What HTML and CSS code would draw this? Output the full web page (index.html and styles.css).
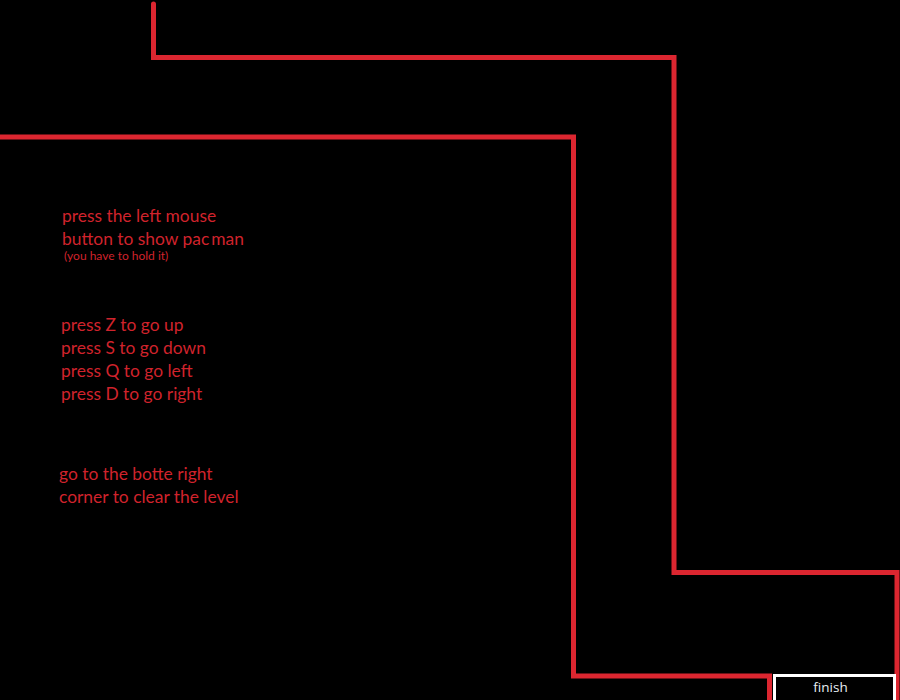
FILE: index.html
```html
<!DOCTYPE html>
<html>
<head>
<meta charset="utf-8">
<link rel="stylesheet" href="styles.css">
</head>
<body>
<div class="stage">
  <svg class="walls" width="900" height="700" viewBox="0 0 900 700">
    <path d="M153.5 4 V57.5 H674 V572.5 H897 V702" />
    <path d="M-2 137 H573.5 V676 H769.5 V702" />
  </svg>
  <div class="help">
    <div class="block b1">
      <p>press the left mouse</p>
      <p>button to show pac<span class="gap"></span>man</p>
      <p class="small">(you have to hold it)</p>
    </div>
    <div class="block b2">
      <p>press Z to go up</p>
      <p>press S to go down</p>
      <p>press Q to go left</p>
      <p>press D to go right</p>
    </div>
    <div class="block b3">
      <p>go to the botte right</p>
      <p>corner to clear the level</p>
    </div>
  </div>
  <div class="finish">finish</div>
</div>
</body>
</html>
```
FILE: styles.css
```css
html, body {
  margin: 0;
  padding: 0;
  background: #000;
  overflow: hidden;
}
.stage {
  position: relative;
  width: 900px;
  height: 700px;
  background: #000;
  font-family: Lato, "Open Sans", sans-serif;
}
.walls {
  position: absolute;
  left: 0;
  top: 0;
}
.walls path {
  fill: none;
  stroke: #dc2630;
  stroke-width: 5;
  stroke-linejoin: miter;
  stroke-linecap: round;
}
.help {
  display: flex;
  flex-direction: column;
  padding-top: 204px;
}
.block p {
  margin: 0;
  font-size: 17.4px;
  line-height: 23px;
  color: #d0232c;
  white-space: nowrap;
}
.b1 { padding-left: 62px; }
.b2 { padding-left: 61px; margin-top: 53px; }
.b3 { padding-left: 59px; margin-top: 57px; }
.block p.small {
  font-size: 12px;
  line-height: 9px;
  margin-top: 1px;
  padding-left: 2px;
}
.gap { display: inline-block; width: 2px; }
.finish {
  position: absolute;
  left: 773px;
  top: 674px;
  width: 109px;
  height: 30px;
  padding-right: 8px;
  border: 3px solid #fff;
  background: #000;
  color: #e8eef2;
  font-family: "Open Sans", sans-serif;
  font-size: 13.5px;
  line-height: 20px;
  text-align: center;
  box-sizing: content-box;
}
```
